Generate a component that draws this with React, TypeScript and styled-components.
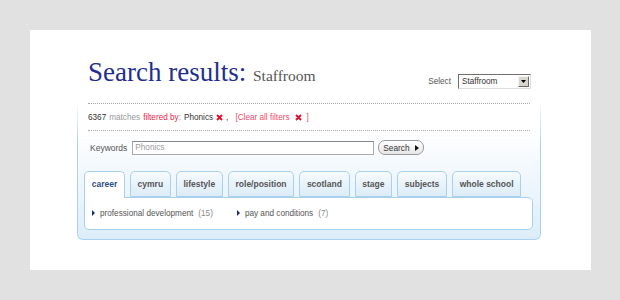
import { createGlobalStyle } from 'styled-components'
import styled from 'styled-components'

const TABS = ['career', 'cymru', 'lifestyle', 'role/position', 'scotland', 'stage', 'subjects', 'whole school']

const LINKS = [
  { label: 'professional development', count: 15 },
  { label: 'pay and conditions', count: 7 },
]

const GlobalStyle = createGlobalStyle`
  html, body {
    margin: 0;
    padding: 0;
    background: #e1e1e1;
    font-family: 'Liberation Sans', Arial, sans-serif;
  }
`

export default function App() {
  return (
    <>
      <GlobalStyle />
      <Card>
        <Header>
          <Title>
            Search results: <Sub>Staffroom</Sub>
          </Title>
          <SelectWrap>
            <SelectLabel>Select</SelectLabel>
            <FakeSelect>
              <span>Staffroom</span>
              <SelectArrow>
                <svg width="5" height="3" viewBox="0 0 5 3">
                  <path d="M0 0h5L2.5 3z" fill="#000" />
                </svg>
              </SelectArrow>
            </FakeSelect>
          </SelectWrap>
        </Header>

        <PanelBorder>
          <Panel>
            <FilterRow>
              <Strong>6367</Strong>
              <Muted>matches</Muted>
              <Red>
                filtered by<Muted>:</Muted>
              </Red>
              <Strong>Phonics</Strong>
              <Cross />
              <Strong>,</Strong>
              <ClearAll>
                [Clear all filters <Cross />]
              </ClearAll>
            </FilterRow>

            <KeywordRow>
              <KeywordLabel>Keywords</KeywordLabel>
              <KeywordInput defaultValue="Phonics" />
              <SearchButton>
                Search
                <svg width="4" height="6" viewBox="0 0 4 6">
                  <path d="M0 0l4 3-4 3z" fill="#111" />
                </svg>
              </SearchButton>
            </KeywordRow>

            <Tabs>
              {TABS.map((t, i) => (
                <Tab key={t} $active={i === 0}>
                  {t}
                </Tab>
              ))}
            </Tabs>
            <TabBody>
              {LINKS.map((l) => (
                <LinkItem key={l.label}>
                  <svg width="3" height="6" viewBox="0 0 3 6">
                    <path d="M0 0l3 3-3 3z" fill="#1b2c6b" />
                  </svg>
                  <LinkText>{l.label}</LinkText>
                  <Count>({l.count})</Count>
                </LinkItem>
              ))}
            </TabBody>
          </Panel>
        </PanelBorder>
      </Card>
    </>
  )
}

function Cross() {
  return (
    <CrossIcon width="7" height="7" viewBox="0 0 7 7">
      <path d="M1 1l5 5M6 1l-5 5" stroke="#e3102f" strokeWidth="1.9" />
    </CrossIcon>
  )
}

const Card = styled.div`
  margin: 30px 29px 30px 30px;
  height: 240px;
  box-sizing: border-box;
  background: #fff;
  padding-top: 29px;
`

const Header = styled.div`
  display: flex;
  align-items: flex-end;
  justify-content: space-between;
  padding: 0 60px 0 58px;
`

const Title = styled.h1`
  margin: 0;
  font-family: 'Liberation Serif', 'Times New Roman', serif;
  font-weight: normal;
  font-size: 27px;
  line-height: 27px;
  color: #1f2f8e;
  white-space: nowrap;
`

const Sub = styled.span`
  font-size: 15.5px;
  color: #555;
`

const SelectWrap = styled.div`
  display: flex;
  align-items: center;
  gap: 7px;
`

const SelectLabel = styled.span`
  font-size: 8.2px;
  color: #555;
`

const FakeSelect = styled.div`
  display: flex;
  align-items: center;
  justify-content: space-between;
  box-sizing: border-box;
  width: 73px;
  height: 15px;
  padding: 0 1px 0 3px;
  border: 1px solid;
  border-color: #6f6f6f #dcdcdc #dcdcdc #6f6f6f;
  background: #fff;
  font-size: 8.2px;
  color: #333;
`

const SelectArrow = styled.span`
  display: flex;
  align-items: center;
  justify-content: center;
  width: 11px;
  height: 11px;
  box-sizing: border-box;
  background: #d8d5ce;
  border: 1px solid;
  border-color: #f4f4f4 #6a6a6a #6a6a6a #f4f4f4;
`

const PanelBorder = styled.div`
  margin: 12px 50px 0 47px;
  padding: 0 1px 1px;
  border-radius: 0 0 6px 6px;
  background: linear-gradient(to bottom, rgba(170, 210, 238, 0) 0, rgba(170, 210, 238, 0.35) 15px, #aad2ee 42px);
`

const Panel = styled.div`
  padding: 2px 0 9px;
  border-radius: 0 0 5px 5px;
  background: linear-gradient(to bottom, #fff 0, #fff 30px, #f2f8fd 70px, #dcedf9 100%);
`

const FilterRow = styled.div`
  display: flex;
  align-items: center;
  gap: 3px;
  height: 26px;
  margin: 0 10px;
  border-top: 1px dotted #aaa;
  border-bottom: 1px dotted #aaa;
  font-size: 8.2px;
  color: #999;
`

const Strong = styled.span`
  color: #333;
`

const Muted = styled.span`
  color: #999;
`

const Red = styled.span`
  color: #e71f4c;
`

const ClearAll = styled.span`
  display: flex;
  align-items: center;
  gap: 5px;
  margin-left: 4px;
  color: #ee4d6a;
`

const CrossIcon = styled.svg`
  display: block;
  flex: none;
`

const KeywordRow = styled.div`
  display: flex;
  align-items: center;
  gap: 5px;
  margin: 9px 12px 0;
  height: 15px;
`

const KeywordLabel = styled.span`
  font-size: 8.5px;
  color: #555;
`

const KeywordInput = styled.input`
  box-sizing: border-box;
  width: 242px;
  height: 14px;
  margin: 0;
  padding: 0 2px;
  border: 1px solid #aaa;
  border-top-color: #888;
  font-family: 'Liberation Sans', Arial, sans-serif;
  font-size: 8.2px;
  color: #9a9a9a;
  outline: none;
`

const SearchButton = styled.button`
  display: flex;
  align-items: center;
  justify-content: space-between;
  box-sizing: border-box;
  width: 46px;
  height: 15px;
  margin-left: -1px;
  padding: 0 4px 0 4px;
  border: 1px solid #9a9a9a;
  border-radius: 7px;
  background: linear-gradient(to bottom, #fff, #e6e6e6);
  font-family: 'Liberation Sans', Arial, sans-serif;
  font-size: 8.3px;
  color: #333;
`

const Tabs = styled.div`
  display: flex;
  gap: 5px;
  margin: 16px 7px 0 6px;
  position: relative;
  z-index: 1;
`

const Tab = styled.div<{ $active?: boolean }>`
  box-sizing: border-box;
  height: ${(p) => (p.$active ? '27px' : '26px')};
  padding: 0 6.7px;
  line-height: 25px;
  border: 1px solid #a9d1ee;
  border-bottom: ${(p) => (p.$active ? 'none' : '1px solid #a9d1ee')};
  border-radius: 5px 5px 0 0;
  background: ${(p) => (p.$active ? '#fff' : 'linear-gradient(to bottom, #f6fafe, #dcecf8)')};
  font-size: 8.5px;
  font-weight: bold;
  color: ${(p) => (p.$active ? '#2f4f86' : '#555')};
  white-space: nowrap;
`

const TabBody = styled.div`
  display: flex;
  align-items: center;
  box-sizing: border-box;
  height: 33px;
  margin: -1px 7px 0 6px;
  padding: 0 7px 1px;
  background: #fff;
  border: 1px solid #a9d1ee;
  border-radius: 0 5px 5px 5px;
`

const LinkItem = styled.div`
  display: flex;
  align-items: center;
  gap: 5px;
  margin-right: 24px;
  font-size: 8.2px;
`

const LinkText = styled.span`
  color: #555;
`

const Count = styled.span`
  color: #8a8a8a;
`
